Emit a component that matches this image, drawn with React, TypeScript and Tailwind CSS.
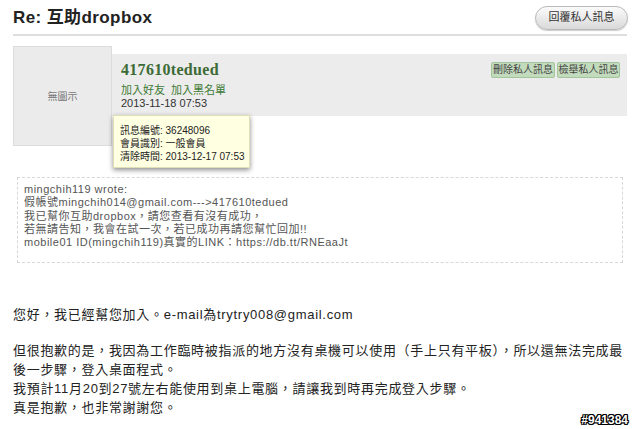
import React from "react";

const font = { fontFamily: '"Liberation Sans", "Noto Sans CJK TC", sans-serif' };

export default function App() {
  return (
    <div className="w-[640px] h-[429px] bg-white relative overflow-hidden text-[#333]" style={font}>
      {/* header */}
      <div className="flex items-center justify-between mx-[13px] pt-[7px] h-[36px] border-b-2 border-[#dedede]">
        <h1 className="text-[17px] font-bold tracking-[0.4px] text-[#222] leading-none mb-[6px]">Re: 互助dropbox</h1>
        <button className="w-[93px] h-[24px] -mr-[1px] rounded-full border border-[#b9b9b9] bg-gradient-to-b from-[#fbfbfb] to-[#d9d9d9] text-[11px] text-[#333] shadow-[0_1px_1px_rgba(0,0,0,0.2)] mb-[6px]">
          回覆私人訊息
        </button>
      </div>

      {/* message header */}
      <div className="flex mt-[10px] px-[13px]">
        <div className="w-[99px] h-[100px] bg-[#ebebeb] border border-[#dcdcdc] flex items-center justify-center text-[10px] text-[#777] shrink-0">
          無圖示
        </div>
        <div className="relative flex-1 mt-[8px] h-[62px] bg-[#ececec] pl-[9px] pr-[7px] pt-[8px] flex justify-between">
          <div className="flex flex-col">
            <div className="text-[16px] font-bold text-[#3d6b37] leading-[16px]" style={{ fontFamily: '"Liberation Serif", serif', letterSpacing: "0.3px" }}>
              417610tedued
            </div>
            <div className="text-[11px] text-[#3d7a35] mt-[6px] leading-[13px]">加入好友&nbsp;&nbsp;加入黑名單</div>
            <div className="text-[11px] text-[#333] leading-[13px]">2013-11-18 07:53</div>
          </div>
          <div className="flex gap-[2px] items-start">
            <button className="h-[16px] w-[64px] text-[10px] leading-none text-[#444] bg-[#c3dbbd] border border-[#a3c59b] rounded-[2px] whitespace-nowrap">刪除私人訊息</button>
            <button className="h-[16px] w-[63px] text-[10px] leading-none text-[#444] bg-[#c3dbbd] border border-[#a3c59b] rounded-[2px] whitespace-nowrap">檢舉私人訊息</button>
          </div>
          <div className="absolute left-[1px] top-[61px] w-[137px] h-[53px] bg-[#ffffe2] border border-[#e0e0b8] shadow-[0_2px_5px_rgba(0,0,0,0.45)] pl-[6px] pt-[9px] text-[10px] leading-[12.8px] text-[#222] z-10 whitespace-nowrap">
            <div>訊息編號: 36248096</div>
            <div>會員識別: 一般會員</div>
            <div>清除時間: 2013-12-17 07:53</div>
          </div>
        </div>
      </div>

      {/* quote */}
      <div className="mx-[17px] mt-[31px] w-[606px] h-[86px] border border-dashed border-[#d8d8d8] pl-[6px] pt-[5px] text-[11px] leading-[13.3px] text-[#555] tracking-[0.5px]">
        <div>mingchih119 wrote:</div>
        <div>假帳號mingchih014@gmail.com---&gt;417610tedued</div>
        <div>我已幫你互助dropbox，請您查看有沒有成功，</div>
        <div>若無請告知，我會在試一次，若已成功再請您幫忙回加!!</div>
        <div>mobile01 ID(mingchih119)真實的LINK：https://db.tt/RNEaaJt</div>
      </div>

      {/* body */}
      <div className="px-[13px] mt-[42px] text-[13px] leading-[19px] text-[#222] tracking-[0.7px]">
        <div>您好，我已經幫您加入。e-mail為trytry008@gmail.com</div>
        <div className="mt-[17px] whitespace-nowrap">但很抱歉的是，我因為工作臨時被指派的地方沒有桌機可以使用（手上只有平板），所以還無法完成最</div>
        <div>後一步驟，登入桌面程式。</div>
        <div>我預計11月20到27號左右能使用到桌上電腦，請讓我到時再完成登入步驟。</div>
        <div>真是抱歉，也非常謝謝您。</div>
      </div>

      <div
        className="absolute right-[12px] bottom-[2px] text-[12px] font-bold text-white leading-[14px]"
        style={{ textShadow: "1px 0 0 #000, -1px 0 0 #000, 0 1px 0 #000, 0 -1px 0 #000, 1px 1px 0 #000, -1px -1px 0 #000, 1px -1px 0 #000, -1px 1px 0 #000" }}
      >
        #941384
      </div>
    </div>
  );
}
